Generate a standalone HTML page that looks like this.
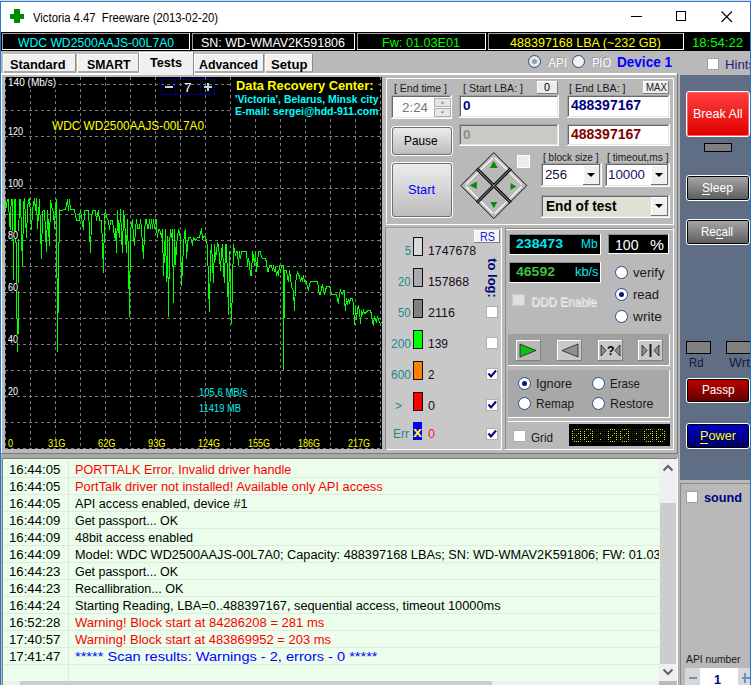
<!DOCTYPE html>
<html><head><meta charset="utf-8"><style>
html,body{margin:0;padding:0;width:751px;height:685px;overflow:hidden;background:#b9b9b9}
body{position:relative;font-family:"Liberation Sans",sans-serif}
div,span,svg{position:absolute;box-sizing:border-box}
span{white-space:pre;display:block}
</style></head><body>
<div style="left:0px;top:0px;width:751px;height:1px;background:#d9d9d9;"></div>
<div style="left:1px;top:2px;width:749px;height:30px;background:#ffffff;"></div>
<div style="left:0px;top:1px;width:1px;height:684px;background:#1a7ad4;"></div>
<div style="left:750px;top:1px;width:1px;height:684px;background:#1a7ad4;"></div>
<div style="left:0px;top:1px;width:751px;height:1px;background:#1a7ad4;"></div>
<div style="left:14px;top:9px;width:6px;height:14px;background:#008a00;"></div>
<div style="left:10px;top:14px;width:14px;height:5px;background:#008a00;"></div>
<span style="left:33px;top:11px;font-size:12px;line-height:14px;color:#000000;font-weight:400;transform:scaleX(0.9413);transform-origin:0 0;">Victoria 4.47  Freeware (2013-02-20)</span>
<div style="left:631px;top:16px;width:11px;height:1px;background:#000000;"></div>
<div style="left:676px;top:11px;width:10px;height:10px;border:1px solid #000"></div>
<svg style="left:721px;top:11px" width="12" height="12"><path d="M0.5 0.5L11 11M11 0.5L0.5 11" stroke="#000" stroke-width="1.1"/></svg>
<div style="left:1px;top:32px;width:749px;height:19px;background:#000000;"></div>
<div style="left:2px;top:33px;width:188px;height:1px;background:#a0a0a0;"></div>
<div style="left:2px;top:33px;width:1px;height:17px;background:#a0a0a0;"></div>
<div style="left:2px;top:49px;width:188px;height:1px;background:#ffffff;"></div>
<div style="left:189px;top:33px;width:1px;height:17px;background:#ffffff;"></div>
<div style="left:192px;top:33px;width:163px;height:1px;background:#a0a0a0;"></div>
<div style="left:192px;top:33px;width:1px;height:17px;background:#a0a0a0;"></div>
<div style="left:192px;top:49px;width:163px;height:1px;background:#ffffff;"></div>
<div style="left:354px;top:33px;width:1px;height:17px;background:#ffffff;"></div>
<div style="left:357px;top:33px;width:129px;height:1px;background:#a0a0a0;"></div>
<div style="left:357px;top:33px;width:1px;height:17px;background:#a0a0a0;"></div>
<div style="left:357px;top:49px;width:129px;height:1px;background:#ffffff;"></div>
<div style="left:485px;top:33px;width:1px;height:17px;background:#ffffff;"></div>
<div style="left:488px;top:33px;width:196px;height:1px;background:#a0a0a0;"></div>
<div style="left:488px;top:33px;width:1px;height:17px;background:#a0a0a0;"></div>
<div style="left:488px;top:49px;width:196px;height:1px;background:#ffffff;"></div>
<div style="left:683px;top:33px;width:1px;height:17px;background:#ffffff;"></div>
<span style="left:18px;top:35px;font-size:13px;line-height:15px;color:#00ffff;font-weight:400;transform:scaleX(0.9347);transform-origin:0 0;">WDC WD2500AAJS-00L7A0</span>
<span style="left:201px;top:35px;font-size:13px;line-height:15px;color:#ffffff;font-weight:400;transform:scaleX(0.9598);transform-origin:0 0;">SN: WD-WMAV2K591806</span>
<span style="left:381.6px;top:35px;font-size:13px;line-height:15px;color:#00ff00;font-weight:400;transform:scaleX(0.9724);transform-origin:0 0;">Fw: 01.03E01</span>
<span style="left:510px;top:35px;font-size:13px;line-height:15px;color:#ffff00;font-weight:400;transform:scaleX(0.9650);transform-origin:0 0;">488397168 LBA (~232 GB)</span>
<span style="left:692px;top:35px;font-size:13px;line-height:15px;color:#00ff00;font-weight:400;transform:scaleX(1.0079);transform-origin:0 0;">18:54:22</span>
<div style="left:1px;top:51px;width:749px;height:634px;background:#b9b9b9;"></div>
<div style="left:3px;top:54px;width:73px;height:19px;background:#f0f0f0;"></div>
<div style="left:3px;top:54px;width:73px;height:1px;background:#ffffff;"></div>
<div style="left:3px;top:54px;width:1px;height:19px;background:#ffffff;"></div>
<div style="left:75px;top:54px;width:1px;height:19px;background:#8a8a8a;"></div>
<div style="left:4px;top:71px;width:72px;height:1px;background:#a9a9a9;"></div>
<div style="left:4px;top:72px;width:72px;height:1px;background:#a9a9a9;"></div>
<div style="left:77px;top:54px;width:62px;height:19px;background:#f0f0f0;"></div>
<div style="left:77px;top:54px;width:62px;height:1px;background:#ffffff;"></div>
<div style="left:77px;top:54px;width:1px;height:19px;background:#ffffff;"></div>
<div style="left:138px;top:54px;width:1px;height:19px;background:#8a8a8a;"></div>
<div style="left:78px;top:71px;width:61px;height:1px;background:#a9a9a9;"></div>
<div style="left:78px;top:72px;width:61px;height:1px;background:#a9a9a9;"></div>
<div style="left:194px;top:54px;width:70px;height:19px;background:#f0f0f0;"></div>
<div style="left:194px;top:54px;width:70px;height:1px;background:#ffffff;"></div>
<div style="left:194px;top:54px;width:1px;height:19px;background:#ffffff;"></div>
<div style="left:263px;top:54px;width:1px;height:19px;background:#8a8a8a;"></div>
<div style="left:195px;top:71px;width:69px;height:1px;background:#a9a9a9;"></div>
<div style="left:195px;top:72px;width:69px;height:1px;background:#a9a9a9;"></div>
<div style="left:265px;top:54px;width:48px;height:19px;background:#f0f0f0;"></div>
<div style="left:265px;top:54px;width:48px;height:1px;background:#ffffff;"></div>
<div style="left:265px;top:54px;width:1px;height:19px;background:#ffffff;"></div>
<div style="left:312px;top:54px;width:1px;height:19px;background:#8a8a8a;"></div>
<div style="left:266px;top:71px;width:47px;height:1px;background:#a9a9a9;"></div>
<div style="left:266px;top:72px;width:47px;height:1px;background:#a9a9a9;"></div>
<div style="left:1px;top:73px;width:677px;height:1px;background:#ffffff;"></div>
<div style="left:1px;top:74px;width:677px;height:1px;background:#ffffff;"></div>
<div style="left:1px;top:73px;width:1px;height:380px;background:#ffffff;"></div>
<div style="left:677px;top:73px;width:1px;height:381px;background:#7a7a7a;"></div>
<div style="left:1px;top:453px;width:677px;height:1px;background:#7a7a7a;"></div>
<div style="left:139px;top:52px;width:55px;height:23px;background:#f0f0f0;"></div>
<div style="left:139px;top:52px;width:55px;height:1px;background:#ffffff;"></div>
<div style="left:139px;top:52px;width:1px;height:23px;background:#ffffff;"></div>
<div style="left:193px;top:52px;width:1px;height:23px;background:#8a8a8a;"></div>
<span style="left:9.5px;top:58px;font-size:12px;line-height:14px;color:#000000;font-weight:700;transform:scaleX(1.0672);transform-origin:0 0;">Standard</span>
<span style="left:86.5px;top:58px;font-size:12px;line-height:14px;color:#000000;font-weight:700;transform:scaleX(1.0196);transform-origin:0 0;">SMART</span>
<span style="left:150px;top:56px;font-size:12px;line-height:14px;color:#000000;font-weight:700;transform:scaleX(1.0508);transform-origin:0 0;">Tests</span>
<span style="left:198.5px;top:58px;font-size:12px;line-height:14px;color:#000000;font-weight:700;transform:scaleX(1.0288);transform-origin:0 0;">Advanced</span>
<span style="left:270.5px;top:58px;font-size:12px;line-height:14px;color:#000000;font-weight:700;transform:scaleX(1.0950);transform-origin:0 0;">Setup</span>
<div style="left:528.0px;top:55.0px;width:13px;height:13px;border:1px solid #1f4e8c;border-radius:50%;background:#e6e6e6"></div>
<div style="left:532.0px;top:59.0px;width:5px;height:5px;border-radius:50%;background:#9a9a9a"></div>
<div style="left:572.0px;top:55.0px;width:13px;height:13px;border:1px solid #1f4e8c;border-radius:50%;background:#f0f0f0"></div>
<span style="left:548px;top:56px;font-size:12px;line-height:14px;color:#ffffff;font-weight:400;transform:scaleX(0.9823);transform-origin:0 0;text-shadow:-1px -1px 0 #9a9a9a;">API</span>
<span style="left:592px;top:56px;font-size:12px;line-height:14px;color:#ffffff;font-weight:400;transform:scaleX(0.9191);transform-origin:0 0;text-shadow:-1px -1px 0 #9a9a9a;">PIO</span>
<span style="left:617px;top:53px;font-size:15px;line-height:17px;color:#0000ff;font-weight:700;transform:scaleX(0.9035);transform-origin:0 0;">Device 1</span>
<div style="left:707px;top:58px;width:12px;height:12px;background:#ffffff;box-shadow:inset 0 0 0 1px #a0a0a0;"></div>
<span style="left:724.5px;top:57px;font-size:13px;line-height:15px;color:#2a1a80;font-weight:400;transform:scaleX(1.0129);transform-origin:0 0;">Hints</span>
<div style="left:5px;top:77px;width:377px;height:372px;background:#000000;"></div>
<svg style="left:0;top:0" width="751" height="685"><line x1="5.5" y1="77" x2="5.5" y2="449" stroke="#7c7c7c" stroke-dasharray="3 3"/><line x1="30.5" y1="77" x2="30.5" y2="449" stroke="#7c7c7c" stroke-dasharray="3 3"/><line x1="55.5" y1="77" x2="55.5" y2="449" stroke="#7c7c7c" stroke-dasharray="3 3"/><line x1="80.5" y1="77" x2="80.5" y2="449" stroke="#7c7c7c" stroke-dasharray="3 3"/><line x1="105.5" y1="77" x2="105.5" y2="449" stroke="#7c7c7c" stroke-dasharray="3 3"/><line x1="130.5" y1="77" x2="130.5" y2="449" stroke="#7c7c7c" stroke-dasharray="3 3"/><line x1="155.5" y1="77" x2="155.5" y2="449" stroke="#7c7c7c" stroke-dasharray="3 3"/><line x1="180.5" y1="77" x2="180.5" y2="449" stroke="#7c7c7c" stroke-dasharray="3 3"/><line x1="205.5" y1="77" x2="205.5" y2="449" stroke="#7c7c7c" stroke-dasharray="3 3"/><line x1="230.5" y1="77" x2="230.5" y2="449" stroke="#7c7c7c" stroke-dasharray="3 3"/><line x1="255.5" y1="77" x2="255.5" y2="449" stroke="#7c7c7c" stroke-dasharray="3 3"/><line x1="280.5" y1="77" x2="280.5" y2="449" stroke="#7c7c7c" stroke-dasharray="3 3"/><line x1="305.5" y1="77" x2="305.5" y2="449" stroke="#7c7c7c" stroke-dasharray="3 3"/><line x1="330.5" y1="77" x2="330.5" y2="449" stroke="#7c7c7c" stroke-dasharray="3 3"/><line x1="355.5" y1="77" x2="355.5" y2="449" stroke="#7c7c7c" stroke-dasharray="3 3"/><line x1="380.5" y1="77" x2="380.5" y2="449" stroke="#7c7c7c" stroke-dasharray="3 3"/><line x1="5" y1="84.5" x2="382" y2="84.5" stroke="#7c7c7c" stroke-dasharray="3 3"/><line x1="5" y1="110.5" x2="382" y2="110.5" stroke="#7c7c7c" stroke-dasharray="3 3"/><line x1="5" y1="136.5" x2="382" y2="136.5" stroke="#7c7c7c" stroke-dasharray="3 3"/><line x1="5" y1="162.5" x2="382" y2="162.5" stroke="#7c7c7c" stroke-dasharray="3 3"/><line x1="5" y1="188.5" x2="382" y2="188.5" stroke="#7c7c7c" stroke-dasharray="3 3"/><line x1="5" y1="214.5" x2="382" y2="214.5" stroke="#7c7c7c" stroke-dasharray="3 3"/><line x1="5" y1="240.5" x2="382" y2="240.5" stroke="#7c7c7c" stroke-dasharray="3 3"/><line x1="5" y1="266.5" x2="382" y2="266.5" stroke="#7c7c7c" stroke-dasharray="3 3"/><line x1="5" y1="292.5" x2="382" y2="292.5" stroke="#7c7c7c" stroke-dasharray="3 3"/><line x1="5" y1="318.5" x2="382" y2="318.5" stroke="#7c7c7c" stroke-dasharray="3 3"/><line x1="5" y1="344.5" x2="382" y2="344.5" stroke="#7c7c7c" stroke-dasharray="3 3"/><line x1="5" y1="370.5" x2="382" y2="370.5" stroke="#7c7c7c" stroke-dasharray="3 3"/><line x1="5" y1="396.5" x2="382" y2="396.5" stroke="#7c7c7c" stroke-dasharray="3 3"/><line x1="5" y1="422.5" x2="382" y2="422.5" stroke="#7c7c7c" stroke-dasharray="3 3"/><line x1="5" y1="448.5" x2="382" y2="448.5" stroke="#7c7c7c" stroke-dasharray="3 3"/></svg>
<svg style="left:0;top:0" width="751" height="685"><polyline points="5.5,199.5 5.5,210.5 6.5,205.5 7.5,199.5 8.5,199.5 9.5,224.5 10.5,229.5 10.5,213.5 11.5,199.5 12.5,199.5 13.5,279.5 14.5,199.5 15.5,199.5 16.5,283.5 17.5,351.5 18.5,316.5 18.5,240.5 19.5,199.5 20.5,199.5 21.5,233.5 22.5,266.5 23.5,204.5 24.5,198.5 25.5,218.5 26.5,237.5 27.5,209.5 28.5,199.5 29.5,198.5 30.5,214.5 31.5,229.5 32.5,210.5 33.5,204.5 34.5,198.5 35.5,210.5 36.5,198.5 37.5,228.5 38.5,214.5 39.5,199.5 40.5,229.5 41.5,258.5 42.5,211.5 43.5,210.5 44.5,210.5 45.5,231.5 46.5,251.5 47.5,210.5 48.5,227.5 49.5,245.5 50.5,200.5 51.5,205.5 52.5,210.5 53.5,211.5 54.5,228.5 55.5,204.5 56.5,199.5 57.5,351.5 58.5,277.5 59.5,209.5 60.5,210.5 62.5,210.5 63.5,209.5 65.5,209.5 66.5,204.5 67.5,199.5 68.5,210.5 69.5,199.5 70.5,209.5 74.5,209.5 75.5,215.5 76.5,220.5 79.5,220.5 79.5,215.5 80.5,210.5 81.5,217.5 82.5,223.5 83.5,229.5 84.5,210.5 88.5,210.5 89.5,231.5 90.5,252.5 91.5,219.5 92.5,210.5 95.5,210.5 96.5,220.5 97.5,214.5 98.5,210.5 99.5,220.5 101.5,220.5 102.5,245.5 103.5,272.5 104.5,215.5 105.5,210.5 106.5,217.5 108.5,220.5 109.5,229.5 110.5,220.5 112.5,220.5 113.5,228.5 114.5,237.5 115.5,228.5 116.5,252.5 117.5,210.5 118.5,228.5 119.5,237.5 120.5,209.5 121.5,236.5 122.5,252.5 123.5,210.5 124.5,219.5 125.5,236.5 126.5,252.5 127.5,219.5 128.5,260.5 129.5,316.5 130.5,229.5 131.5,224.5 132.5,219.5 133.5,237.5 134.5,245.5 135.5,228.5 136.5,219.5 137.5,228.5 139.5,228.5 140.5,219.5 141.5,228.5 142.5,244.5 143.5,258.5 144.5,232.5 145.5,219.5 146.5,219.5 147.5,228.5 148.5,228.5 149.5,219.5 150.5,228.5 151.5,219.5 152.5,228.5 153.5,219.5 154.5,228.5 155.5,219.5 156.5,219.5 156.5,228.5 157.5,237.5 158.5,229.5 159.5,229.5 160.5,232.5 161.5,237.5 162.5,229.5 163.5,275.5 164.5,252.5 165.5,229.5 166.5,281.5 167.5,236.5 168.5,316.5 169.5,244.5 170.5,229.5 171.5,237.5 172.5,229.5 173.5,302.5 174.5,229.5 175.5,264.5 176.5,245.5 177.5,237.5 178.5,229.5 179.5,233.5 180.5,237.5 181.5,285.5 182.5,267.5 183.5,245.5 184.5,232.5 185.5,229.5 186.5,258.5 187.5,245.5 188.5,237.5 190.5,237.5 191.5,240.5 192.5,245.5 193.5,237.5 195.5,240.5 196.5,238.5 197.5,237.5 199.5,237.5 200.5,233.5 201.5,228.5 202.5,238.5 203.5,236.5 205.5,236.5 206.5,241.5 207.5,245.5 208.5,285.5 209.5,311.5 210.5,255.5 211.5,244.5 212.5,262.5 213.5,282.5 214.5,244.5 215.5,259.5 216.5,251.5 217.5,243.5 218.5,245.5 219.5,257.5 220.5,270.5 221.5,251.5 222.5,244.5 223.5,270.5 224.5,282.5 225.5,244.5 226.5,244.5 227.5,279.5 228.5,314.5 229.5,251.5 230.5,289.5 231.5,323.5 232.5,283.5 233.5,244.5 234.5,251.5 235.5,254.5 236.5,251.5 237.5,251.5 238.5,265.5 239.5,251.5 240.5,258.5 241.5,251.5 246.5,251.5 247.5,265.5 248.5,258.5 249.5,263.5 250.5,275.5 251.5,275.5 252.5,251.5 253.5,255.5 254.5,265.5 255.5,251.5 256.5,271.5 257.5,263.5 258.5,251.5 260.5,251.5 261.5,257.5 262.5,258.5 265.5,258.5 266.5,262.5 267.5,271.5 268.5,271.5 269.5,265.5 271.5,265.5 272.5,270.5 273.5,265.5 274.5,271.5 275.5,267.5 276.5,275.5 277.5,272.5 278.5,275.5 279.5,265.5 280.5,272.5 281.5,265.5 283.5,265.5 283.5,369.5 284.5,270.5 286.5,270.5 287.5,277.5 288.5,281.5 289.5,270.5 290.5,276.5 291.5,286.5 293.5,291.5 294.5,310.5 295.5,283.5 296.5,276.5 297.5,271.5 298.5,275.5 299.5,275.5 300.5,281.5 301.5,277.5 302.5,281.5 303.5,275.5 304.5,281.5 305.5,280.5 306.5,282.5 307.5,287.5 308.5,290.5 309.5,284.5 310.5,281.5 317.5,281.5 318.5,288.5 319.5,294.5 320.5,294.5 321.5,287.5 322.5,285.5 323.5,289.5 324.5,294.5 325.5,290.5 326.5,286.5 329.5,286.5 330.5,288.5 331.5,294.5 336.5,294.5 337.5,299.5 338.5,303.5 339.5,293.5 340.5,290.5 341.5,293.5 342.5,294.5 343.5,290.5 344.5,290.5 344.5,300.5 345.5,310.5 346.5,298.5 347.5,303.5 348.5,300.5 349.5,302.5 350.5,298.5 352.5,298.5 353.5,305.5 354.5,324.5 355.5,306.5 356.5,319.5 357.5,308.5 358.5,306.5 359.5,310.5 360.5,323.5 361.5,310.5 362.5,314.5 363.5,310.5 364.5,313.5 366.5,312.5 367.5,310.5 370.5,310.5 371.5,314.5 372.5,322.5 373.5,324.5 374.5,316.5 375.5,319.5 376.5,322.5 377.5,316.5 378.5,320.5 380.5,323.5 381.5,322.5" fill="none" stroke="#00ff00" stroke-width="1" shape-rendering="crispEdges"/></svg>
<div style="left:6px;top:77px;width:51px;height:13px;background:#000000;"></div>
<span style="left:7.5px;top:77px;font-size:10px;line-height:11px;color:#ffffff;font-weight:400;transform:scaleX(1.0044);transform-origin:0 0;">140 (Mb/s)</span>
<div style="left:7px;top:127px;width:17px;height:8px;background:#000000;"></div>
<span style="left:7.5px;top:126px;font-size:10px;line-height:11px;color:#ffffff;font-weight:400;transform:scaleX(0.8991);transform-origin:0 0;">120</span>
<div style="left:7px;top:179px;width:17px;height:8px;background:#000000;"></div>
<span style="left:7.5px;top:178px;font-size:10px;line-height:11px;color:#ffffff;font-weight:400;transform:scaleX(0.8991);transform-origin:0 0;">100</span>
<div style="left:7px;top:231px;width:12px;height:8px;background:#000000;"></div>
<span style="left:7.5px;top:230px;font-size:10px;line-height:11px;color:#ffffff;font-weight:400;transform:scaleX(0.8991);transform-origin:0 0;">80</span>
<div style="left:7px;top:283px;width:12px;height:8px;background:#000000;"></div>
<span style="left:7.5px;top:282px;font-size:10px;line-height:11px;color:#ffffff;font-weight:400;transform:scaleX(0.8991);transform-origin:0 0;">60</span>
<div style="left:7px;top:335px;width:12px;height:8px;background:#000000;"></div>
<span style="left:7.5px;top:334px;font-size:10px;line-height:11px;color:#ffffff;font-weight:400;transform:scaleX(0.8991);transform-origin:0 0;">40</span>
<div style="left:7px;top:387px;width:12px;height:8px;background:#000000;"></div>
<span style="left:7.5px;top:386px;font-size:10px;line-height:11px;color:#ffffff;font-weight:400;transform:scaleX(0.8991);transform-origin:0 0;">20</span>
<div style="left:7px;top:439px;width:8px;height:8px;background:#000000;"></div>
<span style="left:8px;top:438px;font-size:10px;line-height:11px;color:#ffff00;font-weight:400;transform:scaleX(0.8991);transform-origin:0 0;">0</span>
<div style="left:47px;top:439px;width:20.5px;height:8px;background:#000000;"></div>
<span style="left:48px;top:438px;font-size:10px;line-height:11px;color:#ffff00;font-weight:400;transform:scaleX(0.9259);transform-origin:0 0;">31G</span>
<div style="left:97px;top:439px;width:20.5px;height:8px;background:#000000;"></div>
<span style="left:98px;top:438px;font-size:10px;line-height:11px;color:#ffff00;font-weight:400;transform:scaleX(0.9259);transform-origin:0 0;">62G</span>
<div style="left:147px;top:439px;width:20.5px;height:8px;background:#000000;"></div>
<span style="left:148px;top:438px;font-size:10px;line-height:11px;color:#ffff00;font-weight:400;transform:scaleX(0.9259);transform-origin:0 0;">93G</span>
<div style="left:197px;top:439px;width:25px;height:8px;background:#000000;"></div>
<span style="left:198px;top:438px;font-size:10px;line-height:11px;color:#ffff00;font-weight:400;transform:scaleX(0.8994);transform-origin:0 0;">124G</span>
<div style="left:247px;top:439px;width:25px;height:8px;background:#000000;"></div>
<span style="left:248px;top:438px;font-size:10px;line-height:11px;color:#ffff00;font-weight:400;transform:scaleX(0.8994);transform-origin:0 0;">155G</span>
<div style="left:297px;top:439px;width:25px;height:8px;background:#000000;"></div>
<span style="left:298px;top:438px;font-size:10px;line-height:11px;color:#ffff00;font-weight:400;transform:scaleX(0.8994);transform-origin:0 0;">186G</span>
<div style="left:347px;top:439px;width:25px;height:8px;background:#000000;"></div>
<span style="left:348px;top:438px;font-size:10px;line-height:11px;color:#ffff00;font-weight:400;transform:scaleX(0.8994);transform-origin:0 0;">217G</span>
<span style="left:51.5px;top:119px;font-size:12px;line-height:14px;color:#ffff00;font-weight:400;transform:scaleX(0.9866);transform-origin:0 0;">WDC WD2500AAJS-00L7A0</span>
<div style="left:231px;top:77px;width:147px;height:41px;background:#000000;"></div>
<div style="left:161px;top:79px;width:54px;height:16px;border:1px solid #00007a"></div>
<div style="left:175px;top:79px;width:1px;height:16px;background:#00007a;"></div>
<div style="left:200px;top:79px;width:1px;height:16px;background:#00007a;"></div>
<div style="left:165px;top:86px;width:8px;height:2px;background:#b8d4f0;"></div>
<div style="left:204px;top:86px;width:8px;height:2px;background:#b8d4f0;"></div>
<div style="left:207px;top:83px;width:2px;height:8px;background:#b8d4f0;"></div>
<span style="left:184px;top:80px;font-size:13px;line-height:15px;color:#ffffff;font-weight:400;transform:scaleX(1.0375);transform-origin:0 0;">7</span>
<span style="left:235.5px;top:78px;font-size:13px;line-height:15px;color:#ffff00;font-weight:700;transform:scaleX(0.9861);transform-origin:0 0;">Data Recovery Center:</span>
<span style="left:234.5px;top:93px;font-size:11px;line-height:12px;color:#00ffff;font-weight:700;transform:scaleX(0.9495);transform-origin:0 0;">'Victoria', Belarus, Minsk city</span>
<span style="left:234.5px;top:105px;font-size:11px;line-height:12px;color:#00ffff;font-weight:700;transform:scaleX(0.9560);transform-origin:0 0;">E-mail: sergei@hdd-911.com</span>
<span style="left:199px;top:387px;font-size:10px;line-height:11px;color:#00f0f0;font-weight:400;transform:scaleX(0.9490);transform-origin:0 0;">105,6 MB/s</span>
<span style="left:199px;top:403px;font-size:10px;line-height:11px;color:#00f0f0;font-weight:400;transform:scaleX(0.9367);transform-origin:0 0;">11419 MB</span>
<div style="left:386px;top:78px;width:288px;height:1px;background:#ffffff;"></div>
<div style="left:386px;top:78px;width:1px;height:145px;background:#ffffff;"></div>
<div style="left:673px;top:78px;width:1px;height:147px;background:#ffffff;"></div>
<div style="left:386px;top:224px;width:288px;height:1px;background:#ffffff;"></div>
<div style="left:677px;top:75px;width:1px;height:379px;background:#7a7a7a;"></div>
<span style="left:394px;top:82px;font-size:11px;line-height:12px;color:#1a1a1a;font-weight:400;transform:scaleX(0.9527);transform-origin:0 0;">[ End time ]</span>
<span style="left:463px;top:82px;font-size:11px;line-height:12px;color:#1a1a1a;font-weight:400;transform:scaleX(0.9622);transform-origin:0 0;">[ Start LBA: ]</span>
<span style="left:569px;top:82px;font-size:11px;line-height:12px;color:#1a1a1a;font-weight:400;transform:scaleX(0.9625);transform-origin:0 0;">[ End LBA: ]</span>
<div style="left:391px;top:95px;width:61px;height:24px;background:#fcfcfc;"></div>
<div style="left:391px;top:95px;width:61px;height:1px;background:#a0a0a0;"></div>
<div style="left:391px;top:95px;width:1px;height:24px;background:#a0a0a0;"></div>
<div style="left:392px;top:96px;width:59px;height:1px;background:#696969;"></div>
<div style="left:392px;top:96px;width:1px;height:22px;background:#696969;"></div>
<div style="left:391px;top:118px;width:61px;height:1px;background:#ffffff;"></div>
<div style="left:451px;top:95px;width:1px;height:24px;background:#ffffff;"></div>
<div style="left:392px;top:117px;width:59px;height:1px;background:#e3e3e3;"></div>
<div style="left:450px;top:96px;width:1px;height:22px;background:#e3e3e3;"></div>
<span style="left:402px;top:100px;font-size:13px;line-height:15px;color:#777777;font-weight:400;transform:scaleX(1.0277);transform-origin:0 0;">2:24</span>
<div style="left:434px;top:98px;width:17px;height:9px;background:#e6e6e6;box-shadow:inset 0 0 0 1px #b0b0b0;"></div>
<div style="left:434px;top:108px;width:17px;height:9px;background:#e6e6e6;box-shadow:inset 0 0 0 1px #b0b0b0;"></div>
<svg style="left:434px;top:98px" width="17" height="19"><path d="M6.5 5.5h4l-2-2z" fill="#8a8a8a"/><path d="M6.5 13.5h4l-2 2z" fill="#8a8a8a"/></svg>
<div style="left:459px;top:95px;width:100px;height:23px;background:#ffffff;"></div>
<div style="left:459px;top:95px;width:100px;height:1px;background:#a0a0a0;"></div>
<div style="left:459px;top:95px;width:1px;height:23px;background:#a0a0a0;"></div>
<div style="left:460px;top:96px;width:98px;height:1px;background:#696969;"></div>
<div style="left:460px;top:96px;width:1px;height:21px;background:#696969;"></div>
<div style="left:459px;top:117px;width:100px;height:1px;background:#ffffff;"></div>
<div style="left:558px;top:95px;width:1px;height:23px;background:#ffffff;"></div>
<div style="left:460px;top:116px;width:98px;height:1px;background:#e3e3e3;"></div>
<div style="left:557px;top:96px;width:1px;height:21px;background:#e3e3e3;"></div>
<span style="left:463px;top:98px;font-size:13px;line-height:15px;color:#000080;font-weight:700;transform:scaleX(1.0375);transform-origin:0 0;">0</span>
<div style="left:459px;top:124px;width:100px;height:22px;background:#cacac6;"></div>
<div style="left:459px;top:124px;width:100px;height:1px;background:#a0a0a0;"></div>
<div style="left:459px;top:124px;width:1px;height:22px;background:#a0a0a0;"></div>
<div style="left:460px;top:125px;width:98px;height:1px;background:#696969;"></div>
<div style="left:460px;top:125px;width:1px;height:20px;background:#696969;"></div>
<div style="left:459px;top:145px;width:100px;height:1px;background:#ffffff;"></div>
<div style="left:558px;top:124px;width:1px;height:22px;background:#ffffff;"></div>
<div style="left:460px;top:144px;width:98px;height:1px;background:#e3e3e3;"></div>
<div style="left:557px;top:125px;width:1px;height:20px;background:#e3e3e3;"></div>
<span style="left:463px;top:127px;font-size:13px;line-height:15px;color:#8c8c8c;font-weight:700;transform:scaleX(1.0375);transform-origin:0 0;">0</span>
<div style="left:537px;top:81px;width:21px;height:13px;background:#ececec;box-shadow:inset -1px -1px 0 #808080, inset 1px 1px 0 #ffffff;"></div>
<span style="left:543.5px;top:81px;font-size:11px;line-height:12px;color:#000000;font-weight:400;transform:scaleX(0.9809);transform-origin:0 0;">0</span>
<div style="left:643px;top:81px;width:26px;height:13px;background:#ececec;box-shadow:inset -1px -1px 0 #808080, inset 1px 1px 0 #ffffff;"></div>
<span style="left:645.5px;top:81px;font-size:11px;line-height:12px;color:#202020;font-weight:400;transform:scaleX(0.8810);transform-origin:0 0;">MAX</span>
<div style="left:567px;top:95px;width:103px;height:23px;background:#ffffff;"></div>
<div style="left:567px;top:95px;width:103px;height:1px;background:#a0a0a0;"></div>
<div style="left:567px;top:95px;width:1px;height:23px;background:#a0a0a0;"></div>
<div style="left:568px;top:96px;width:101px;height:1px;background:#696969;"></div>
<div style="left:568px;top:96px;width:1px;height:21px;background:#696969;"></div>
<div style="left:567px;top:117px;width:103px;height:1px;background:#ffffff;"></div>
<div style="left:669px;top:95px;width:1px;height:23px;background:#ffffff;"></div>
<div style="left:568px;top:116px;width:101px;height:1px;background:#e3e3e3;"></div>
<div style="left:668px;top:96px;width:1px;height:21px;background:#e3e3e3;"></div>
<span style="left:571px;top:97px;font-size:14px;line-height:16px;color:#000080;font-weight:700;transform:scaleX(0.9990);transform-origin:0 0;">488397167</span>
<div style="left:567px;top:124px;width:103px;height:22px;background:#ffffff;"></div>
<div style="left:567px;top:124px;width:103px;height:1px;background:#a0a0a0;"></div>
<div style="left:567px;top:124px;width:1px;height:22px;background:#a0a0a0;"></div>
<div style="left:568px;top:125px;width:101px;height:1px;background:#696969;"></div>
<div style="left:568px;top:125px;width:1px;height:20px;background:#696969;"></div>
<div style="left:567px;top:145px;width:103px;height:1px;background:#ffffff;"></div>
<div style="left:669px;top:124px;width:1px;height:22px;background:#ffffff;"></div>
<div style="left:568px;top:144px;width:101px;height:1px;background:#e3e3e3;"></div>
<div style="left:668px;top:125px;width:1px;height:20px;background:#e3e3e3;"></div>
<span style="left:571px;top:126px;font-size:14px;line-height:16px;color:#800000;font-weight:700;transform:scaleX(0.9990);transform-origin:0 0;">488397167</span>
<div style="left:392px;top:127px;width:60px;height:28px;border:1px solid #707070;border-radius:3px;background:linear-gradient(#ececec,#bdbdbd);box-shadow:0 0 0 1px #ffffff"></div>
<span style="left:404px;top:133px;font-size:13px;line-height:15px;color:#000000;font-weight:400;transform:scaleX(0.9089);transform-origin:0 0;">Pause</span>
<div style="left:392px;top:163px;width:60px;height:54px;border:1px solid #707070;border-radius:3px;background:linear-gradient(#ececec,#bdbdbd);box-shadow:0 0 0 1px #ffffff"></div>
<span style="left:408px;top:182px;font-size:13px;line-height:15px;color:#0000ff;font-weight:400;transform:scaleX(0.9835);transform-origin:0 0;">Start</span>
<svg style="left:458px;top:150px" width="72" height="72">
<g transform="translate(35.8,35.6)">
<path d="M0 -33 L33 0 L0 33 L-33 0 Z" fill="#b9b9b9" stroke="#111" stroke-width="1"/>
<path d="M-30 -1 L-1 -30 M1 -30 L30 -1 M-30 1 L-1 30 M1 30 L30 1" fill="none" stroke="#ffffff" stroke-width="1.3" transform="scale(0.93)"/>
<path d="M-17 -17 L17 17" stroke="#111" stroke-width="3.2"/>
<path d="M-17 17 L17 -17" stroke="#111" stroke-width="3.2"/>
<path d="M-17 -17 L17 17" stroke="#9a9a9a" stroke-width="1"/>
<path d="M-17 17 L17 -17" stroke="#9a9a9a" stroke-width="1"/>
<path d="M-4 -17.5 L4 -17.5 L0 -24.5 Z" fill="#0a8a0a"/>
<path d="M-3.5 16.5 L3.5 16.5 L0 22.5 Z" fill="#0a8a0a"/>
<path d="M-17 -4 L-17 3.5 L-24.2 0 Z" fill="#0a8a0a"/>
<path d="M16.7 -2.5 L16.7 4.5 L22.5 1 Z" fill="#0a8a0a"/>
</g></svg>
<div style="left:517px;top:155px;width:13px;height:13px;background:#ececec;box-shadow:inset 0 0 0 1px #ffffff;"></div>
<span style="left:542.5px;top:151px;font-size:11px;line-height:12px;color:#1a1a1a;font-weight:400;transform:scaleX(0.9171);transform-origin:0 0;">[ block size ]</span>
<span style="left:606.5px;top:151px;font-size:11px;line-height:12px;color:#1a1a1a;font-weight:400;transform:scaleX(0.9316);transform-origin:0 0;">[ timeout,ms ]</span>
<div style="left:541px;top:163px;width:61px;height:24px;background:#ffffff;"></div>
<div style="left:541px;top:163px;width:61px;height:1px;background:#a0a0a0;"></div>
<div style="left:541px;top:163px;width:1px;height:24px;background:#a0a0a0;"></div>
<div style="left:542px;top:164px;width:59px;height:1px;background:#696969;"></div>
<div style="left:542px;top:164px;width:1px;height:22px;background:#696969;"></div>
<div style="left:541px;top:186px;width:61px;height:1px;background:#ffffff;"></div>
<div style="left:601px;top:163px;width:1px;height:24px;background:#ffffff;"></div>
<div style="left:542px;top:185px;width:59px;height:1px;background:#e3e3e3;"></div>
<div style="left:600px;top:164px;width:1px;height:22px;background:#e3e3e3;"></div>
<div style="left:583px;top:165px;width:17px;height:20px;background:#f0f0f0;box-shadow:inset -1px -1px 0 #707070, inset 1px 1px 0 #ffffff;"></div>
<svg style="left:586.0px;top:171.5px" width="10" height="6"><path d="M1 1H9L5 5Z" fill="#000"/></svg>
<span style="left:544.5px;top:167px;font-size:13px;line-height:15px;color:#10103a;font-weight:400;transform:scaleX(1.0144);transform-origin:0 0;">256</span>
<div style="left:605px;top:163px;width:65px;height:24px;background:#ffffff;"></div>
<div style="left:605px;top:163px;width:65px;height:1px;background:#a0a0a0;"></div>
<div style="left:605px;top:163px;width:1px;height:24px;background:#a0a0a0;"></div>
<div style="left:606px;top:164px;width:63px;height:1px;background:#696969;"></div>
<div style="left:606px;top:164px;width:1px;height:22px;background:#696969;"></div>
<div style="left:605px;top:186px;width:65px;height:1px;background:#ffffff;"></div>
<div style="left:669px;top:163px;width:1px;height:24px;background:#ffffff;"></div>
<div style="left:606px;top:185px;width:63px;height:1px;background:#e3e3e3;"></div>
<div style="left:668px;top:164px;width:1px;height:22px;background:#e3e3e3;"></div>
<div style="left:651px;top:165px;width:17px;height:20px;background:#f0f0f0;box-shadow:inset -1px -1px 0 #707070, inset 1px 1px 0 #ffffff;"></div>
<svg style="left:654.0px;top:171.5px" width="10" height="6"><path d="M1 1H9L5 5Z" fill="#000"/></svg>
<span style="left:608px;top:167px;font-size:13px;line-height:15px;color:#20106a;font-weight:400;transform:scaleX(1.0236);transform-origin:0 0;">10000</span>
<div style="left:541px;top:195px;width:129px;height:23px;background:#e0e0d4;"></div>
<div style="left:541px;top:195px;width:129px;height:1px;background:#a0a0a0;"></div>
<div style="left:541px;top:195px;width:1px;height:23px;background:#a0a0a0;"></div>
<div style="left:542px;top:196px;width:127px;height:1px;background:#696969;"></div>
<div style="left:542px;top:196px;width:1px;height:21px;background:#696969;"></div>
<div style="left:541px;top:217px;width:129px;height:1px;background:#ffffff;"></div>
<div style="left:669px;top:195px;width:1px;height:23px;background:#ffffff;"></div>
<div style="left:542px;top:216px;width:127px;height:1px;background:#e3e3e3;"></div>
<div style="left:668px;top:196px;width:1px;height:21px;background:#e3e3e3;"></div>
<div style="left:651px;top:197px;width:17px;height:19px;background:#f0f0f0;box-shadow:inset -1px -1px 0 #707070, inset 1px 1px 0 #ffffff;"></div>
<svg style="left:654.0px;top:203.0px" width="10" height="6"><path d="M1 1H9L5 5Z" fill="#000"/></svg>
<span style="left:545.5px;top:198px;font-size:14px;line-height:16px;color:#000000;font-weight:700;transform:scaleX(0.9748);transform-origin:0 0;">End of test</span>
<div style="left:386px;top:228px;width:115px;height:221px;background:#c8c8c8;"></div>
<div style="left:385px;top:228px;width:1px;height:222px;background:#8a8a8a;"></div>
<div style="left:385px;top:227px;width:116px;height:1px;background:#a0a0a0;"></div>
<div style="left:501px;top:228px;width:1px;height:222px;background:#ffffff;"></div>
<div style="left:386px;top:449px;width:116px;height:1px;background:#ffffff;"></div>
<div style="left:474px;top:230px;width:26px;height:13px;background:#f4f4f4;box-shadow:inset -1px -1px 0 #808080, inset 1px 1px 0 #ffffff;"></div>
<span style="left:479.5px;top:230px;font-size:12px;line-height:14px;color:#2020e0;font-weight:400;transform:scaleX(0.8998);transform-origin:0 0;">RS</span>
<span style="left:404.7px;top:243px;font-size:13px;line-height:15px;color:#208888;font-weight:400;transform:scaleX(0.8300);transform-origin:0 0;">5</span>
<div style="left:413px;top:237px;width:10px;height:19px;background:#d9d9d9;box-shadow:inset 0 0 0 1px #101010;"></div>
<span style="left:427.5px;top:243px;font-size:13px;line-height:15px;color:#1a0a1a;font-weight:400;transform:scaleX(0.9485);transform-origin:0 0;">1747678</span>
<span style="left:398.2px;top:274px;font-size:13px;line-height:15px;color:#208888;font-weight:400;transform:scaleX(0.8645);transform-origin:0 0;">20</span>
<div style="left:413px;top:268px;width:10px;height:19px;background:#aaaab0;box-shadow:inset 0 0 0 1px #101010;"></div>
<span style="left:427.5px;top:274px;font-size:13px;line-height:15px;color:#1a0a1a;font-weight:400;transform:scaleX(0.9452);transform-origin:0 0;">157868</span>
<span style="left:398.2px;top:305px;font-size:13px;line-height:15px;color:#208888;font-weight:400;transform:scaleX(0.8645);transform-origin:0 0;">50</span>
<div style="left:413px;top:299px;width:10px;height:19px;background:#808080;box-shadow:inset 0 0 0 1px #101010;"></div>
<span style="left:427.5px;top:305px;font-size:13px;line-height:15px;color:#1a0a1a;font-weight:400;transform:scaleX(0.9659);transform-origin:0 0;">2116</span>
<div style="left:486px;top:306px;width:12px;height:12px;background:#ffffff;box-shadow:inset 0 0 0 1px #b0b0b0;"></div>
<span style="left:390.7px;top:336px;font-size:13px;line-height:15px;color:#208888;font-weight:400;transform:scaleX(0.9222);transform-origin:0 0;">200</span>
<div style="left:413px;top:330px;width:10px;height:19px;background:#00ff00;box-shadow:inset 0 0 0 1px #101010;"></div>
<span style="left:427.5px;top:336px;font-size:13px;line-height:15px;color:#1a0a1a;font-weight:400;transform:scaleX(0.9222);transform-origin:0 0;">139</span>
<div style="left:486px;top:337px;width:12px;height:12px;background:#ffffff;box-shadow:inset 0 0 0 1px #b0b0b0;"></div>
<span style="left:390.7px;top:367px;font-size:13px;line-height:15px;color:#208888;font-weight:400;transform:scaleX(0.9222);transform-origin:0 0;">600</span>
<div style="left:413px;top:361px;width:10px;height:19px;background:#ff8000;box-shadow:inset 0 0 0 1px #101010;"></div>
<span style="left:427.5px;top:367px;font-size:13px;line-height:15px;color:#1a0a1a;font-weight:400;transform:scaleX(0.8991);transform-origin:0 0;">2</span>
<div style="left:486px;top:368px;width:12px;height:12px;background:#ffffff;box-shadow:inset 0 0 0 1px #b0b0b0;"></div>
<svg style="left:486px;top:368px" width="12" height="12"><path d="M2.5 5.5L5 8.5L10 2.5" fill="none" stroke="#000080" stroke-width="2"/></svg>
<span style="left:394.8px;top:398px;font-size:13px;line-height:15px;color:#208888;font-weight:400;transform:scaleX(0.9219);transform-origin:0 0;">&gt;</span>
<div style="left:413px;top:392px;width:10px;height:19px;background:#ff0000;box-shadow:inset 0 0 0 1px #101010;"></div>
<span style="left:427.5px;top:398px;font-size:13px;line-height:15px;color:#1a0a1a;font-weight:400;transform:scaleX(0.9683);transform-origin:0 0;">0</span>
<div style="left:486px;top:399px;width:12px;height:12px;background:#ffffff;box-shadow:inset 0 0 0 1px #b0b0b0;"></div>
<svg style="left:486px;top:399px" width="12" height="12"><path d="M2.5 5.5L5 8.5L10 2.5" fill="none" stroke="#000080" stroke-width="2"/></svg>
<span style="left:392.5px;top:426px;font-size:13px;line-height:15px;color:#208888;font-weight:400;transform:scaleX(0.9233);transform-origin:0 0;">Err</span>
<div style="left:413px;top:422px;width:9px;height:18px;background:#0000ff;"></div>
<span style="left:413px;top:424px;font-size:14px;line-height:16px;color:#ffff00;font-weight:700;transform:scaleX(1.1560);transform-origin:0 0;">x</span>
<span style="left:427.5px;top:426px;font-size:13px;line-height:15px;color:#ff2020;font-weight:400;transform:scaleX(0.9683);transform-origin:0 0;">0</span>
<div style="left:486px;top:428px;width:12px;height:12px;background:#ffffff;box-shadow:inset 0 0 0 1px #b0b0b0;"></div>
<svg style="left:486px;top:428px" width="12" height="12"><path d="M2.5 5.5L5 8.5L10 2.5" fill="none" stroke="#000080" stroke-width="2"/></svg>
<span style="left:471px;top:270.5px;width:41px;height:14px;font-size:13px;line-height:14px;font-weight:700;color:#000080;transform:rotate(90deg);transform-origin:50% 50%;text-align:center">to log:</span>
<div style="left:505px;top:228px;width:169px;height:1px;background:#8a8a8a;"></div>
<div style="left:505px;top:228px;width:1px;height:222px;background:#8a8a8a;"></div>
<div style="left:505px;top:449px;width:169px;height:1px;background:#ffffff;"></div>
<div style="left:673px;top:228px;width:1px;height:222px;background:#ffffff;"></div>
<div style="left:506px;top:229px;width:167px;height:1px;background:#ffffff;"></div>
<div style="left:509px;top:234px;width:92px;height:21px;background:#000000;"></div>
<div style="left:509px;top:234px;width:92px;height:1px;background:#8a8a8a;"></div>
<div style="left:509px;top:234px;width:1px;height:21px;background:#8a8a8a;"></div>
<div style="left:509px;top:254px;width:92px;height:1px;background:#ffffff;"></div>
<div style="left:600px;top:234px;width:1px;height:21px;background:#ffffff;"></div>
<span style="left:515.5px;top:237px;font-size:12px;line-height:14px;color:#00e8f0;font-weight:700;transform:scaleX(1.1739);transform-origin:0 0;">238473</span>
<span style="left:580.5px;top:237px;font-size:12px;line-height:14px;color:#00e8f0;font-weight:400;transform:scaleX(0.9899);transform-origin:0 0;">Mb</span>
<div style="left:608px;top:234px;width:61px;height:20px;background:#000000;"></div>
<div style="left:608px;top:234px;width:61px;height:1px;background:#8a8a8a;"></div>
<div style="left:608px;top:234px;width:1px;height:20px;background:#8a8a8a;"></div>
<div style="left:608px;top:253px;width:61px;height:1px;background:#ffffff;"></div>
<div style="left:668px;top:234px;width:1px;height:20px;background:#ffffff;"></div>
<span style="left:614.5px;top:236px;font-size:15px;line-height:17px;color:#ffffff;font-weight:400;transform:scaleX(0.9391);transform-origin:0 0;">100</span>
<span style="left:650px;top:236px;font-size:15px;line-height:17px;color:#ffffff;font-weight:400;transform:scaleX(1.0496);transform-origin:0 0;">%</span>
<div style="left:509px;top:262px;width:92px;height:21px;background:#000000;"></div>
<div style="left:509px;top:262px;width:92px;height:1px;background:#8a8a8a;"></div>
<div style="left:509px;top:262px;width:1px;height:21px;background:#8a8a8a;"></div>
<div style="left:509px;top:282px;width:92px;height:1px;background:#ffffff;"></div>
<div style="left:600px;top:262px;width:1px;height:21px;background:#ffffff;"></div>
<span style="left:515.5px;top:265px;font-size:12px;line-height:14px;color:#40c040;font-weight:700;transform:scaleX(1.1689);transform-origin:0 0;">46592</span>
<span style="left:574.5px;top:265px;font-size:12px;line-height:14px;color:#00e8f0;font-weight:400;transform:scaleX(1.0678);transform-origin:0 0;">kb/s</span>
<div style="left:512px;top:294px;width:13px;height:12px;background:#e0e0e0;box-shadow:inset 0 0 0 1px #c8c8c8;"></div>
<span style="left:531px;top:294px;font-size:13px;line-height:15px;color:#d8d8d8;font-weight:400;transform:scaleX(0.9065);transform-origin:0 0;text-shadow:1px 1px 0 #f0f0f0;">DDD Enable</span>
<div style="left:615.0px;top:265.5px;width:13px;height:13px;border:1px solid #1f4e8c;border-radius:50%;background:#ffffff"></div>
<span style="left:633px;top:265px;font-size:13px;line-height:15px;color:#1a1a1a;font-weight:400;transform:scaleX(1.0142);transform-origin:0 0;">verify</span>
<div style="left:615.0px;top:287.5px;width:13px;height:13px;border:1px solid #1f4e8c;border-radius:50%;background:#ffffff"></div>
<div style="left:619.0px;top:291.5px;width:5px;height:5px;border-radius:50%;background:#0a1a6a"></div>
<span style="left:633px;top:287px;font-size:13px;line-height:15px;color:#1a1a1a;font-weight:400;transform:scaleX(0.9994);transform-origin:0 0;">read</span>
<div style="left:615.0px;top:309.5px;width:13px;height:13px;border:1px solid #1f4e8c;border-radius:50%;background:#ffffff"></div>
<span style="left:633px;top:309px;font-size:13px;line-height:15px;color:#1a1a1a;font-weight:400;transform:scaleX(1.0566);transform-origin:0 0;">write</span>
<div style="left:508px;top:334px;width:162px;height:32px;background:#a0a0a0;"></div>
<div style="left:508px;top:365px;width:162px;height:1px;background:#ffffff;"></div>
<div style="left:669px;top:334px;width:1px;height:32px;background:#ffffff;"></div>
<div style="left:516px;top:340px;width:25px;height:21px;background:#b8b8b8;box-shadow:inset -1px -1px 0 #808080, inset 1px 1px 0 #ffffff;"></div>
<div style="left:557px;top:340px;width:25px;height:21px;background:#c8c8c8;box-shadow:inset -1px -1px 0 #808080, inset 1px 1px 0 #ffffff;"></div>
<div style="left:598px;top:340px;width:25px;height:21px;background:#c8c8c8;box-shadow:inset -1px -1px 0 #808080, inset 1px 1px 0 #ffffff;"></div>
<div style="left:638px;top:340px;width:25px;height:21px;background:#c8c8c8;box-shadow:inset -1px -1px 0 #808080, inset 1px 1px 0 #ffffff;"></div>
<svg style="left:516px;top:340px" width="25" height="21"><path d="M4 4L20 10.5L4 17Z" fill="#10c010" stroke="#202020" stroke-width="0.8"/></svg>
<svg style="left:557px;top:340px" width="25" height="21"><path d="M21 4L5 10.5L21 17Z" fill="#909090" stroke="#202020" stroke-width="0.8"/></svg>
<svg style="left:598px;top:340px" width="25" height="21"><path d="M3 5L8 10.5L3 16Z" fill="#909090" stroke="#202020" stroke-width="0.8"/><path d="M22 5L17 10.5L22 16Z" fill="#909090" stroke="#202020" stroke-width="0.8"/></svg>
<span style="left:606.5px;top:343px;font-size:13px;line-height:15px;color:#000000;font-weight:700;transform:scaleX(0.9446);transform-origin:0 0;">?</span>
<svg style="left:638px;top:340px" width="25" height="21"><path d="M4 5L9 10.5L4 16Z" fill="#909090" stroke="#202020" stroke-width="0.8"/><path d="M21 5L16 10.5L21 16Z" fill="#909090" stroke="#202020" stroke-width="0.8"/><rect x="11.5" y="4" width="2" height="13" fill="#202020"/></svg>
<div style="left:508px;top:370px;width:162px;height:47px;background:#a8a8a8;"></div>
<div style="left:508px;top:417px;width:162px;height:1px;background:#ffffff;"></div>
<div style="left:669px;top:370px;width:1px;height:48px;background:#ffffff;"></div>
<div style="left:518.0px;top:376.5px;width:13px;height:13px;border:1px solid #1f4e8c;border-radius:50%;background:#ffffff"></div>
<div style="left:522.0px;top:380.5px;width:5px;height:5px;border-radius:50%;background:#0a1a6a"></div>
<span style="left:536.0px;top:376px;font-size:13px;line-height:15px;color:#1a1a1a;font-weight:400;transform:scaleX(0.9767);transform-origin:0 0;">Ignore</span>
<div style="left:518.0px;top:396.5px;width:13px;height:13px;border:1px solid #1f4e8c;border-radius:50%;background:#ffffff"></div>
<span style="left:536.0px;top:396px;font-size:13px;line-height:15px;color:#1a1a1a;font-weight:400;transform:scaleX(0.9068);transform-origin:0 0;">Remap</span>
<div style="left:592.0px;top:376.5px;width:13px;height:13px;border:1px solid #1f4e8c;border-radius:50%;background:#ffffff"></div>
<span style="left:610.0px;top:376px;font-size:13px;line-height:15px;color:#1a1a1a;font-weight:400;transform:scaleX(0.8834);transform-origin:0 0;">Erase</span>
<div style="left:592.0px;top:396.5px;width:13px;height:13px;border:1px solid #1f4e8c;border-radius:50%;background:#ffffff"></div>
<span style="left:610.0px;top:396px;font-size:13px;line-height:15px;color:#1a1a1a;font-weight:400;transform:scaleX(0.9557);transform-origin:0 0;">Restore</span>
<div style="left:508px;top:421px;width:162px;height:1px;background:#ffffff;"></div>
<div style="left:513px;top:430px;width:13px;height:12px;background:#ffffff;box-shadow:inset 0 0 0 1px #b0b0b0;"></div>
<span style="left:531px;top:430px;font-size:13px;line-height:15px;color:#1a1a1a;font-weight:400;transform:scaleX(0.8958);transform-origin:0 0;">Grid</span>
<div style="left:569px;top:424px;width:101px;height:22px;background:#000000;"></div>
<svg style="left:0;top:0" width="751" height="685" shape-rendering="crispEdges"><rect x="572" y="429" width="1" height="1" fill="#103010"/><rect x="572" y="431" width="1" height="1" fill="#f0e000"/><rect x="572" y="433" width="1" height="1" fill="#f0e000"/><rect x="572" y="435" width="1" height="1" fill="#f0e000"/><rect x="572" y="437" width="1" height="1" fill="#f0e000"/><rect x="572" y="439" width="1" height="1" fill="#f0e000"/><rect x="572" y="441" width="1" height="1" fill="#103010"/><rect x="574" y="429" width="1" height="1" fill="#f0e000"/><rect x="574" y="431" width="1" height="1" fill="#103010"/><rect x="574" y="433" width="1" height="1" fill="#103010"/><rect x="574" y="435" width="1" height="1" fill="#103010"/><rect x="574" y="437" width="1" height="1" fill="#f0e000"/><rect x="574" y="439" width="1" height="1" fill="#103010"/><rect x="574" y="441" width="1" height="1" fill="#f0e000"/><rect x="576" y="429" width="1" height="1" fill="#f0e000"/><rect x="576" y="431" width="1" height="1" fill="#103010"/><rect x="576" y="433" width="1" height="1" fill="#103010"/><rect x="576" y="435" width="1" height="1" fill="#f0e000"/><rect x="576" y="437" width="1" height="1" fill="#103010"/><rect x="576" y="439" width="1" height="1" fill="#103010"/><rect x="576" y="441" width="1" height="1" fill="#f0e000"/><rect x="578" y="429" width="1" height="1" fill="#f0e000"/><rect x="578" y="431" width="1" height="1" fill="#103010"/><rect x="578" y="433" width="1" height="1" fill="#f0e000"/><rect x="578" y="435" width="1" height="1" fill="#103010"/><rect x="578" y="437" width="1" height="1" fill="#103010"/><rect x="578" y="439" width="1" height="1" fill="#103010"/><rect x="578" y="441" width="1" height="1" fill="#f0e000"/><rect x="580" y="429" width="1" height="1" fill="#103010"/><rect x="580" y="431" width="1" height="1" fill="#f0e000"/><rect x="580" y="433" width="1" height="1" fill="#f0e000"/><rect x="580" y="435" width="1" height="1" fill="#f0e000"/><rect x="580" y="437" width="1" height="1" fill="#f0e000"/><rect x="580" y="439" width="1" height="1" fill="#f0e000"/><rect x="580" y="441" width="1" height="1" fill="#103010"/><rect x="582" y="429" width="1" height="1" fill="#103010"/><rect x="582" y="431" width="1" height="1" fill="#103010"/><rect x="582" y="433" width="1" height="1" fill="#103010"/><rect x="582" y="435" width="1" height="1" fill="#103010"/><rect x="582" y="437" width="1" height="1" fill="#103010"/><rect x="582" y="439" width="1" height="1" fill="#103010"/><rect x="582" y="441" width="1" height="1" fill="#103010"/><rect x="584" y="429" width="1" height="1" fill="#103010"/><rect x="584" y="431" width="1" height="1" fill="#f0e000"/><rect x="584" y="433" width="1" height="1" fill="#f0e000"/><rect x="584" y="435" width="1" height="1" fill="#f0e000"/><rect x="584" y="437" width="1" height="1" fill="#f0e000"/><rect x="584" y="439" width="1" height="1" fill="#f0e000"/><rect x="584" y="441" width="1" height="1" fill="#103010"/><rect x="586" y="429" width="1" height="1" fill="#f0e000"/><rect x="586" y="431" width="1" height="1" fill="#103010"/><rect x="586" y="433" width="1" height="1" fill="#103010"/><rect x="586" y="435" width="1" height="1" fill="#103010"/><rect x="586" y="437" width="1" height="1" fill="#f0e000"/><rect x="586" y="439" width="1" height="1" fill="#103010"/><rect x="586" y="441" width="1" height="1" fill="#f0e000"/><rect x="588" y="429" width="1" height="1" fill="#f0e000"/><rect x="588" y="431" width="1" height="1" fill="#103010"/><rect x="588" y="433" width="1" height="1" fill="#103010"/><rect x="588" y="435" width="1" height="1" fill="#f0e000"/><rect x="588" y="437" width="1" height="1" fill="#103010"/><rect x="588" y="439" width="1" height="1" fill="#103010"/><rect x="588" y="441" width="1" height="1" fill="#f0e000"/><rect x="590" y="429" width="1" height="1" fill="#f0e000"/><rect x="590" y="431" width="1" height="1" fill="#103010"/><rect x="590" y="433" width="1" height="1" fill="#f0e000"/><rect x="590" y="435" width="1" height="1" fill="#103010"/><rect x="590" y="437" width="1" height="1" fill="#103010"/><rect x="590" y="439" width="1" height="1" fill="#103010"/><rect x="590" y="441" width="1" height="1" fill="#f0e000"/><rect x="592" y="429" width="1" height="1" fill="#103010"/><rect x="592" y="431" width="1" height="1" fill="#f0e000"/><rect x="592" y="433" width="1" height="1" fill="#f0e000"/><rect x="592" y="435" width="1" height="1" fill="#f0e000"/><rect x="592" y="437" width="1" height="1" fill="#f0e000"/><rect x="592" y="439" width="1" height="1" fill="#f0e000"/><rect x="592" y="441" width="1" height="1" fill="#103010"/><rect x="594" y="429" width="1" height="1" fill="#103010"/><rect x="594" y="431" width="1" height="1" fill="#103010"/><rect x="594" y="433" width="1" height="1" fill="#103010"/><rect x="594" y="435" width="1" height="1" fill="#103010"/><rect x="594" y="437" width="1" height="1" fill="#103010"/><rect x="594" y="439" width="1" height="1" fill="#103010"/><rect x="594" y="441" width="1" height="1" fill="#103010"/><rect x="596" y="429" width="1" height="1" fill="#103010"/><rect x="596" y="431" width="1" height="1" fill="#103010"/><rect x="596" y="433" width="1" height="1" fill="#103010"/><rect x="596" y="435" width="1" height="1" fill="#103010"/><rect x="596" y="437" width="1" height="1" fill="#103010"/><rect x="596" y="439" width="1" height="1" fill="#103010"/><rect x="596" y="441" width="1" height="1" fill="#103010"/><rect x="598" y="429" width="1" height="1" fill="#103010"/><rect x="598" y="431" width="1" height="1" fill="#103010"/><rect x="598" y="433" width="1" height="1" fill="#103010"/><rect x="598" y="435" width="1" height="1" fill="#103010"/><rect x="598" y="437" width="1" height="1" fill="#103010"/><rect x="598" y="439" width="1" height="1" fill="#103010"/><rect x="598" y="441" width="1" height="1" fill="#103010"/><rect x="600" y="429" width="1" height="1" fill="#103010"/><rect x="600" y="431" width="1" height="1" fill="#103010"/><rect x="600" y="433" width="1" height="1" fill="#f0e000"/><rect x="600" y="435" width="1" height="1" fill="#103010"/><rect x="600" y="437" width="1" height="1" fill="#103010"/><rect x="600" y="439" width="1" height="1" fill="#f0e000"/><rect x="600" y="441" width="1" height="1" fill="#103010"/><rect x="602" y="429" width="1" height="1" fill="#103010"/><rect x="602" y="431" width="1" height="1" fill="#103010"/><rect x="602" y="433" width="1" height="1" fill="#103010"/><rect x="602" y="435" width="1" height="1" fill="#103010"/><rect x="602" y="437" width="1" height="1" fill="#103010"/><rect x="602" y="439" width="1" height="1" fill="#103010"/><rect x="602" y="441" width="1" height="1" fill="#103010"/><rect x="604" y="429" width="1" height="1" fill="#103010"/><rect x="604" y="431" width="1" height="1" fill="#103010"/><rect x="604" y="433" width="1" height="1" fill="#103010"/><rect x="604" y="435" width="1" height="1" fill="#103010"/><rect x="604" y="437" width="1" height="1" fill="#103010"/><rect x="604" y="439" width="1" height="1" fill="#103010"/><rect x="604" y="441" width="1" height="1" fill="#103010"/><rect x="606" y="429" width="1" height="1" fill="#103010"/><rect x="606" y="431" width="1" height="1" fill="#103010"/><rect x="606" y="433" width="1" height="1" fill="#103010"/><rect x="606" y="435" width="1" height="1" fill="#103010"/><rect x="606" y="437" width="1" height="1" fill="#103010"/><rect x="606" y="439" width="1" height="1" fill="#103010"/><rect x="606" y="441" width="1" height="1" fill="#103010"/><rect x="608" y="429" width="1" height="1" fill="#103010"/><rect x="608" y="431" width="1" height="1" fill="#f0e000"/><rect x="608" y="433" width="1" height="1" fill="#f0e000"/><rect x="608" y="435" width="1" height="1" fill="#f0e000"/><rect x="608" y="437" width="1" height="1" fill="#f0e000"/><rect x="608" y="439" width="1" height="1" fill="#f0e000"/><rect x="608" y="441" width="1" height="1" fill="#103010"/><rect x="610" y="429" width="1" height="1" fill="#f0e000"/><rect x="610" y="431" width="1" height="1" fill="#103010"/><rect x="610" y="433" width="1" height="1" fill="#103010"/><rect x="610" y="435" width="1" height="1" fill="#103010"/><rect x="610" y="437" width="1" height="1" fill="#f0e000"/><rect x="610" y="439" width="1" height="1" fill="#103010"/><rect x="610" y="441" width="1" height="1" fill="#f0e000"/><rect x="612" y="429" width="1" height="1" fill="#f0e000"/><rect x="612" y="431" width="1" height="1" fill="#103010"/><rect x="612" y="433" width="1" height="1" fill="#103010"/><rect x="612" y="435" width="1" height="1" fill="#f0e000"/><rect x="612" y="437" width="1" height="1" fill="#103010"/><rect x="612" y="439" width="1" height="1" fill="#103010"/><rect x="612" y="441" width="1" height="1" fill="#f0e000"/><rect x="614" y="429" width="1" height="1" fill="#f0e000"/><rect x="614" y="431" width="1" height="1" fill="#103010"/><rect x="614" y="433" width="1" height="1" fill="#f0e000"/><rect x="614" y="435" width="1" height="1" fill="#103010"/><rect x="614" y="437" width="1" height="1" fill="#103010"/><rect x="614" y="439" width="1" height="1" fill="#103010"/><rect x="614" y="441" width="1" height="1" fill="#f0e000"/><rect x="616" y="429" width="1" height="1" fill="#103010"/><rect x="616" y="431" width="1" height="1" fill="#f0e000"/><rect x="616" y="433" width="1" height="1" fill="#f0e000"/><rect x="616" y="435" width="1" height="1" fill="#f0e000"/><rect x="616" y="437" width="1" height="1" fill="#f0e000"/><rect x="616" y="439" width="1" height="1" fill="#f0e000"/><rect x="616" y="441" width="1" height="1" fill="#103010"/><rect x="618" y="429" width="1" height="1" fill="#103010"/><rect x="618" y="431" width="1" height="1" fill="#103010"/><rect x="618" y="433" width="1" height="1" fill="#103010"/><rect x="618" y="435" width="1" height="1" fill="#103010"/><rect x="618" y="437" width="1" height="1" fill="#103010"/><rect x="618" y="439" width="1" height="1" fill="#103010"/><rect x="618" y="441" width="1" height="1" fill="#103010"/><rect x="620" y="429" width="1" height="1" fill="#103010"/><rect x="620" y="431" width="1" height="1" fill="#f0e000"/><rect x="620" y="433" width="1" height="1" fill="#f0e000"/><rect x="620" y="435" width="1" height="1" fill="#f0e000"/><rect x="620" y="437" width="1" height="1" fill="#f0e000"/><rect x="620" y="439" width="1" height="1" fill="#f0e000"/><rect x="620" y="441" width="1" height="1" fill="#103010"/><rect x="622" y="429" width="1" height="1" fill="#f0e000"/><rect x="622" y="431" width="1" height="1" fill="#103010"/><rect x="622" y="433" width="1" height="1" fill="#103010"/><rect x="622" y="435" width="1" height="1" fill="#103010"/><rect x="622" y="437" width="1" height="1" fill="#f0e000"/><rect x="622" y="439" width="1" height="1" fill="#103010"/><rect x="622" y="441" width="1" height="1" fill="#f0e000"/><rect x="624" y="429" width="1" height="1" fill="#f0e000"/><rect x="624" y="431" width="1" height="1" fill="#103010"/><rect x="624" y="433" width="1" height="1" fill="#103010"/><rect x="624" y="435" width="1" height="1" fill="#f0e000"/><rect x="624" y="437" width="1" height="1" fill="#103010"/><rect x="624" y="439" width="1" height="1" fill="#103010"/><rect x="624" y="441" width="1" height="1" fill="#f0e000"/><rect x="626" y="429" width="1" height="1" fill="#f0e000"/><rect x="626" y="431" width="1" height="1" fill="#103010"/><rect x="626" y="433" width="1" height="1" fill="#f0e000"/><rect x="626" y="435" width="1" height="1" fill="#103010"/><rect x="626" y="437" width="1" height="1" fill="#103010"/><rect x="626" y="439" width="1" height="1" fill="#103010"/><rect x="626" y="441" width="1" height="1" fill="#f0e000"/><rect x="628" y="429" width="1" height="1" fill="#103010"/><rect x="628" y="431" width="1" height="1" fill="#f0e000"/><rect x="628" y="433" width="1" height="1" fill="#f0e000"/><rect x="628" y="435" width="1" height="1" fill="#f0e000"/><rect x="628" y="437" width="1" height="1" fill="#f0e000"/><rect x="628" y="439" width="1" height="1" fill="#f0e000"/><rect x="628" y="441" width="1" height="1" fill="#103010"/><rect x="630" y="429" width="1" height="1" fill="#103010"/><rect x="630" y="431" width="1" height="1" fill="#103010"/><rect x="630" y="433" width="1" height="1" fill="#103010"/><rect x="630" y="435" width="1" height="1" fill="#103010"/><rect x="630" y="437" width="1" height="1" fill="#103010"/><rect x="630" y="439" width="1" height="1" fill="#103010"/><rect x="630" y="441" width="1" height="1" fill="#103010"/><rect x="632" y="429" width="1" height="1" fill="#103010"/><rect x="632" y="431" width="1" height="1" fill="#103010"/><rect x="632" y="433" width="1" height="1" fill="#103010"/><rect x="632" y="435" width="1" height="1" fill="#103010"/><rect x="632" y="437" width="1" height="1" fill="#103010"/><rect x="632" y="439" width="1" height="1" fill="#103010"/><rect x="632" y="441" width="1" height="1" fill="#103010"/><rect x="634" y="429" width="1" height="1" fill="#103010"/><rect x="634" y="431" width="1" height="1" fill="#103010"/><rect x="634" y="433" width="1" height="1" fill="#103010"/><rect x="634" y="435" width="1" height="1" fill="#103010"/><rect x="634" y="437" width="1" height="1" fill="#103010"/><rect x="634" y="439" width="1" height="1" fill="#103010"/><rect x="634" y="441" width="1" height="1" fill="#103010"/><rect x="636" y="429" width="1" height="1" fill="#103010"/><rect x="636" y="431" width="1" height="1" fill="#103010"/><rect x="636" y="433" width="1" height="1" fill="#f0e000"/><rect x="636" y="435" width="1" height="1" fill="#103010"/><rect x="636" y="437" width="1" height="1" fill="#103010"/><rect x="636" y="439" width="1" height="1" fill="#f0e000"/><rect x="636" y="441" width="1" height="1" fill="#103010"/><rect x="638" y="429" width="1" height="1" fill="#103010"/><rect x="638" y="431" width="1" height="1" fill="#103010"/><rect x="638" y="433" width="1" height="1" fill="#103010"/><rect x="638" y="435" width="1" height="1" fill="#103010"/><rect x="638" y="437" width="1" height="1" fill="#103010"/><rect x="638" y="439" width="1" height="1" fill="#103010"/><rect x="638" y="441" width="1" height="1" fill="#103010"/><rect x="640" y="429" width="1" height="1" fill="#103010"/><rect x="640" y="431" width="1" height="1" fill="#103010"/><rect x="640" y="433" width="1" height="1" fill="#103010"/><rect x="640" y="435" width="1" height="1" fill="#103010"/><rect x="640" y="437" width="1" height="1" fill="#103010"/><rect x="640" y="439" width="1" height="1" fill="#103010"/><rect x="640" y="441" width="1" height="1" fill="#103010"/><rect x="642" y="429" width="1" height="1" fill="#103010"/><rect x="642" y="431" width="1" height="1" fill="#103010"/><rect x="642" y="433" width="1" height="1" fill="#103010"/><rect x="642" y="435" width="1" height="1" fill="#103010"/><rect x="642" y="437" width="1" height="1" fill="#103010"/><rect x="642" y="439" width="1" height="1" fill="#103010"/><rect x="642" y="441" width="1" height="1" fill="#103010"/><rect x="644" y="429" width="1" height="1" fill="#103010"/><rect x="644" y="431" width="1" height="1" fill="#f0e000"/><rect x="644" y="433" width="1" height="1" fill="#f0e000"/><rect x="644" y="435" width="1" height="1" fill="#f0e000"/><rect x="644" y="437" width="1" height="1" fill="#f0e000"/><rect x="644" y="439" width="1" height="1" fill="#f0e000"/><rect x="644" y="441" width="1" height="1" fill="#103010"/><rect x="646" y="429" width="1" height="1" fill="#f0e000"/><rect x="646" y="431" width="1" height="1" fill="#103010"/><rect x="646" y="433" width="1" height="1" fill="#103010"/><rect x="646" y="435" width="1" height="1" fill="#103010"/><rect x="646" y="437" width="1" height="1" fill="#f0e000"/><rect x="646" y="439" width="1" height="1" fill="#103010"/><rect x="646" y="441" width="1" height="1" fill="#f0e000"/><rect x="648" y="429" width="1" height="1" fill="#f0e000"/><rect x="648" y="431" width="1" height="1" fill="#103010"/><rect x="648" y="433" width="1" height="1" fill="#103010"/><rect x="648" y="435" width="1" height="1" fill="#f0e000"/><rect x="648" y="437" width="1" height="1" fill="#103010"/><rect x="648" y="439" width="1" height="1" fill="#103010"/><rect x="648" y="441" width="1" height="1" fill="#f0e000"/><rect x="650" y="429" width="1" height="1" fill="#f0e000"/><rect x="650" y="431" width="1" height="1" fill="#103010"/><rect x="650" y="433" width="1" height="1" fill="#f0e000"/><rect x="650" y="435" width="1" height="1" fill="#103010"/><rect x="650" y="437" width="1" height="1" fill="#103010"/><rect x="650" y="439" width="1" height="1" fill="#103010"/><rect x="650" y="441" width="1" height="1" fill="#f0e000"/><rect x="652" y="429" width="1" height="1" fill="#103010"/><rect x="652" y="431" width="1" height="1" fill="#f0e000"/><rect x="652" y="433" width="1" height="1" fill="#f0e000"/><rect x="652" y="435" width="1" height="1" fill="#f0e000"/><rect x="652" y="437" width="1" height="1" fill="#f0e000"/><rect x="652" y="439" width="1" height="1" fill="#f0e000"/><rect x="652" y="441" width="1" height="1" fill="#103010"/><rect x="654" y="429" width="1" height="1" fill="#103010"/><rect x="654" y="431" width="1" height="1" fill="#103010"/><rect x="654" y="433" width="1" height="1" fill="#103010"/><rect x="654" y="435" width="1" height="1" fill="#103010"/><rect x="654" y="437" width="1" height="1" fill="#103010"/><rect x="654" y="439" width="1" height="1" fill="#103010"/><rect x="654" y="441" width="1" height="1" fill="#103010"/><rect x="656" y="429" width="1" height="1" fill="#103010"/><rect x="656" y="431" width="1" height="1" fill="#f0e000"/><rect x="656" y="433" width="1" height="1" fill="#f0e000"/><rect x="656" y="435" width="1" height="1" fill="#f0e000"/><rect x="656" y="437" width="1" height="1" fill="#f0e000"/><rect x="656" y="439" width="1" height="1" fill="#f0e000"/><rect x="656" y="441" width="1" height="1" fill="#103010"/><rect x="658" y="429" width="1" height="1" fill="#f0e000"/><rect x="658" y="431" width="1" height="1" fill="#103010"/><rect x="658" y="433" width="1" height="1" fill="#103010"/><rect x="658" y="435" width="1" height="1" fill="#103010"/><rect x="658" y="437" width="1" height="1" fill="#f0e000"/><rect x="658" y="439" width="1" height="1" fill="#103010"/><rect x="658" y="441" width="1" height="1" fill="#f0e000"/><rect x="660" y="429" width="1" height="1" fill="#f0e000"/><rect x="660" y="431" width="1" height="1" fill="#103010"/><rect x="660" y="433" width="1" height="1" fill="#103010"/><rect x="660" y="435" width="1" height="1" fill="#f0e000"/><rect x="660" y="437" width="1" height="1" fill="#103010"/><rect x="660" y="439" width="1" height="1" fill="#103010"/><rect x="660" y="441" width="1" height="1" fill="#f0e000"/><rect x="662" y="429" width="1" height="1" fill="#f0e000"/><rect x="662" y="431" width="1" height="1" fill="#103010"/><rect x="662" y="433" width="1" height="1" fill="#f0e000"/><rect x="662" y="435" width="1" height="1" fill="#103010"/><rect x="662" y="437" width="1" height="1" fill="#103010"/><rect x="662" y="439" width="1" height="1" fill="#103010"/><rect x="662" y="441" width="1" height="1" fill="#f0e000"/><rect x="664" y="429" width="1" height="1" fill="#103010"/><rect x="664" y="431" width="1" height="1" fill="#f0e000"/><rect x="664" y="433" width="1" height="1" fill="#f0e000"/><rect x="664" y="435" width="1" height="1" fill="#f0e000"/><rect x="664" y="437" width="1" height="1" fill="#f0e000"/><rect x="664" y="439" width="1" height="1" fill="#f0e000"/><rect x="664" y="441" width="1" height="1" fill="#103010"/><rect x="666" y="429" width="1" height="1" fill="#103010"/><rect x="666" y="431" width="1" height="1" fill="#103010"/><rect x="666" y="433" width="1" height="1" fill="#103010"/><rect x="666" y="435" width="1" height="1" fill="#103010"/><rect x="666" y="437" width="1" height="1" fill="#103010"/><rect x="666" y="439" width="1" height="1" fill="#103010"/><rect x="666" y="441" width="1" height="1" fill="#103010"/></svg>
<div style="left:680px;top:75px;width:70px;height:405px;background:#5f6e84;"></div>
<div style="left:678px;top:75px;width:1px;height:610px;background:#a8a8a8;"></div>
<div style="left:686px;top:91px;width:64px;height:46px;border:1px solid #ffffff;border-radius:3px;background:linear-gradient(#ff4040,#e00000);box-shadow:inset 0 0 0 1px #ff6060"></div>
<span style="left:692.5px;top:106px;font-size:13px;line-height:15px;color:#ffffff;font-weight:400;transform:scaleX(0.9649);transform-origin:0 0;">Break All</span>
<div style="left:704px;top:143px;width:28px;height:9px;background:#808080;box-shadow:inset 0 0 0 1px #000;"></div>
<div style="left:686px;top:175px;width:64px;height:26px;border:1px solid #ffffff;border-radius:3px;background:linear-gradient(#a8a8a8,#5c5c5c);box-shadow:inset 0 0 0 1px #000000"></div>
<span style="left:701.5px;top:180px;font-size:13px;line-height:15px;color:#ffffff;font-weight:400;transform:scaleX(0.9324);transform-origin:0 0;">Sleep</span>
<div style="left:702px;top:194px;width:8px;height:1px;background:#ffffff;"></div>
<div style="left:686px;top:219px;width:64px;height:26px;border:1px solid #ffffff;border-radius:3px;background:linear-gradient(#a8a8a8,#5c5c5c);box-shadow:inset 0 0 0 1px #000000"></div>
<span style="left:701px;top:224px;font-size:13px;line-height:15px;color:#ffffff;font-weight:400;transform:scaleX(0.8858);transform-origin:0 0;">Recall</span>
<div style="left:716px;top:238px;width:7px;height:1px;background:#ffffff;"></div>
<div style="left:686px;top:341px;width:25px;height:13px;background:#808080;box-shadow:inset 0 0 0 1px #000;"></div>
<div style="left:726px;top:341px;width:27px;height:13px;background:#808080;box-shadow:inset 0 0 0 1px #000;"></div>
<span style="left:688.5px;top:355px;font-size:13px;line-height:15px;color:#1a1a30;font-weight:400;transform:scaleX(0.8726);transform-origin:0 0;">Rd</span>
<span style="left:729px;top:355px;font-size:13px;line-height:15px;color:#1a1a30;font-weight:400;transform:scaleX(1.0513);transform-origin:0 0;">Wrt</span>
<div style="left:686px;top:378px;width:64px;height:25px;border:1px solid #ffffff;border-radius:3px;background:linear-gradient(#c00000,#600000);box-shadow:inset 0 0 0 1px #000000"></div>
<span style="left:701.5px;top:382px;font-size:13px;line-height:15px;color:#ffffff;font-weight:400;transform:scaleX(0.8995);transform-origin:0 0;">Passp</span>
<div style="left:686px;top:423px;width:64px;height:26px;border:1px solid #ffffff;border-radius:3px;background:linear-gradient(#0000c8,#000060);box-shadow:inset 0 0 0 1px #000000"></div>
<span style="left:699.5px;top:428px;font-size:13px;line-height:15px;color:#ffff00;font-weight:400;transform:scaleX(0.9770);transform-origin:0 0;">Power</span>
<div style="left:700px;top:443px;width:8px;height:1px;background:#ffff00;"></div>
<div style="left:750px;top:1px;width:1px;height:684px;background:#1a7ad4;"></div>
<div style="left:680px;top:483px;width:70px;height:1px;background:#8a8a8a;"></div>
<div style="left:680px;top:483px;width:1px;height:202px;background:#8a8a8a;"></div>
<div style="left:686px;top:491px;width:12px;height:12px;background:#ffffff;box-shadow:inset 0 0 0 1px #a0a0a0;"></div>
<span style="left:703.5px;top:490px;font-size:13px;line-height:15px;color:#000080;font-weight:700;transform:scaleX(0.9746);transform-origin:0 0;">sound</span>
<span style="left:685.5px;top:653px;font-size:11px;line-height:12px;color:#1a1a1a;font-weight:400;transform:scaleX(0.9384);transform-origin:0 0;">API number</span>
<div style="left:685px;top:668px;width:15px;height:17px;background:#d8d8d8;"></div>
<div style="left:700px;top:668px;width:38px;height:17px;background:#ffffff;"></div>
<div style="left:738px;top:668px;width:12px;height:17px;background:#d8d8d8;"></div>
<div style="left:689px;top:677px;width:8px;height:2px;background:#7090c0;"></div>
<div style="left:742px;top:677px;width:8px;height:2px;background:#7090c0;"></div>
<div style="left:744px;top:673px;width:2px;height:10px;background:#7090c0;"></div>
<span style="left:714px;top:672px;font-size:13px;line-height:15px;color:#000080;font-weight:700;transform:scaleX(0.9683);transform-origin:0 0;">1</span>
<div style="left:2px;top:454px;width:676px;height:4px;background:#a8a8a8;"></div>
<div style="left:2px;top:453px;width:676px;height:1px;background:#7a7a7a;"></div>
<div style="left:2px;top:458px;width:676px;height:1px;background:#808080;"></div>
<div style="left:3px;top:459px;width:656px;height:222px;background:#ebfdeb;"></div>
<div style="left:2px;top:458px;width:1px;height:227px;background:#808080;"></div>
<div style="left:3px;top:477px;width:656px;height:1px;background:#e4e8e2;"></div>
<div style="left:3px;top:494px;width:656px;height:1px;background:#e4e8e2;"></div>
<div style="left:3px;top:511px;width:656px;height:1px;background:#e4e8e2;"></div>
<div style="left:3px;top:528px;width:656px;height:1px;background:#e4e8e2;"></div>
<div style="left:3px;top:545px;width:656px;height:1px;background:#e4e8e2;"></div>
<div style="left:3px;top:562px;width:656px;height:1px;background:#e4e8e2;"></div>
<div style="left:3px;top:579px;width:656px;height:1px;background:#e4e8e2;"></div>
<div style="left:3px;top:596px;width:656px;height:1px;background:#e4e8e2;"></div>
<div style="left:3px;top:613px;width:656px;height:1px;background:#e4e8e2;"></div>
<div style="left:3px;top:630px;width:656px;height:1px;background:#e4e8e2;"></div>
<div style="left:3px;top:647px;width:656px;height:1px;background:#e4e8e2;"></div>
<div style="left:3px;top:664px;width:656px;height:1px;background:#e4e8e2;"></div>
<div style="left:3px;top:681px;width:656px;height:1px;background:#e4e8e2;"></div>
<div style="left:68px;top:459px;width:1px;height:222px;background:#e4e8e2;"></div>
<div style="left:659px;top:459px;width:18px;height:222px;background:#f0f0f0;"></div>
<div style="left:660px;top:503px;width:16px;height:161px;background:#cdcdcd;"></div>
<svg style="left:660px;top:462px" width="16" height="12"><path d="M3.5 8.5L8 4L12.5 8.5" fill="none" stroke="#606060" stroke-width="2"/></svg>
<svg style="left:660px;top:666px" width="16" height="12"><path d="M3.5 3.5L8 8L12.5 3.5" fill="none" stroke="#606060" stroke-width="2"/></svg>
<div style="left:3px;top:681px;width:656px;height:4px;background:#f0f0f0;"></div>
<div style="left:20px;top:681px;width:472px;height:4px;background:#cdcdcd;"></div>
<div style="left:677px;top:458px;width:1px;height:227px;background:#ffffff;"></div>
<div style="left:3px;top:459px;width:656px;height:222px;overflow:hidden">
<span style="left:6.3px;top:4px;font-size:12px;line-height:14px;color:#000000;font-weight:400;transform:scaleX(1.0984);transform-origin:0 0;">16:44:05</span>
<span style="left:71.5px;top:4px;font-size:12px;line-height:14px;color:#ff0000;font-weight:400;transform:scaleX(1.0519);transform-origin:0 0;">PORTTALK Error. Invalid driver handle</span>
<span style="left:6.3px;top:21px;font-size:12px;line-height:14px;color:#000000;font-weight:400;transform:scaleX(1.0984);transform-origin:0 0;">16:44:05</span>
<span style="left:71.5px;top:21px;font-size:12px;line-height:14px;color:#ff0000;font-weight:400;transform:scaleX(1.0737);transform-origin:0 0;">PortTalk driver not installed! Available only API access</span>
<span style="left:6.3px;top:38px;font-size:12px;line-height:14px;color:#000000;font-weight:400;transform:scaleX(1.0984);transform-origin:0 0;">16:44:05</span>
<span style="left:71.5px;top:38px;font-size:12px;line-height:14px;color:#000000;font-weight:400;transform:scaleX(1.0506);transform-origin:0 0;">API access enabled, device #1</span>
<span style="left:6.3px;top:55px;font-size:12px;line-height:14px;color:#000000;font-weight:400;transform:scaleX(1.0984);transform-origin:0 0;">16:44:09</span>
<span style="left:71.5px;top:55px;font-size:12px;line-height:14px;color:#000000;font-weight:400;transform:scaleX(1.0375);transform-origin:0 0;">Get passport... OK</span>
<span style="left:6.3px;top:72px;font-size:12px;line-height:14px;color:#000000;font-weight:400;transform:scaleX(1.0984);transform-origin:0 0;">16:44:09</span>
<span style="left:71.5px;top:72px;font-size:12px;line-height:14px;color:#000000;font-weight:400;transform:scaleX(1.0476);transform-origin:0 0;">48bit access enabled</span>
<span style="left:6.3px;top:89px;font-size:12px;line-height:14px;color:#000000;font-weight:400;transform:scaleX(1.0984);transform-origin:0 0;">16:44:09</span>
<span style="left:71.5px;top:89px;font-size:12px;line-height:14px;color:#000000;font-weight:400;transform:scaleX(1.0600);transform-origin:0 0;">Model: WDC WD2500AAJS-00L7A0; Capacity: 488397168 LBAs; SN: WD-WMAV2K591806; FW: 01.03E01</span>
<span style="left:6.3px;top:106px;font-size:12px;line-height:14px;color:#000000;font-weight:400;transform:scaleX(1.0984);transform-origin:0 0;">16:44:23</span>
<span style="left:71.5px;top:106px;font-size:12px;line-height:14px;color:#000000;font-weight:400;transform:scaleX(1.0375);transform-origin:0 0;">Get passport... OK</span>
<span style="left:6.3px;top:123px;font-size:12px;line-height:14px;color:#000000;font-weight:400;transform:scaleX(1.0984);transform-origin:0 0;">16:44:23</span>
<span style="left:71.5px;top:123px;font-size:12px;line-height:14px;color:#000000;font-weight:400;transform:scaleX(1.0496);transform-origin:0 0;">Recallibration... OK</span>
<span style="left:6.3px;top:140px;font-size:12px;line-height:14px;color:#000000;font-weight:400;transform:scaleX(1.0984);transform-origin:0 0;">16:44:24</span>
<span style="left:71.5px;top:140px;font-size:12px;line-height:14px;color:#000000;font-weight:400;transform:scaleX(1.0640);transform-origin:0 0;">Starting Reading, LBA=0..488397167, sequential access, timeout 10000ms</span>
<span style="left:6.3px;top:157px;font-size:12px;line-height:14px;color:#000000;font-weight:400;transform:scaleX(1.0984);transform-origin:0 0;">16:52:28</span>
<span style="left:71.5px;top:157px;font-size:12px;line-height:14px;color:#ff0000;font-weight:400;transform:scaleX(1.0835);transform-origin:0 0;">Warning! Block start at 84286208 = 281 ms</span>
<span style="left:6.3px;top:174px;font-size:12px;line-height:14px;color:#000000;font-weight:400;transform:scaleX(1.0984);transform-origin:0 0;">17:40:57</span>
<span style="left:71.5px;top:174px;font-size:12px;line-height:14px;color:#ff0000;font-weight:400;transform:scaleX(1.0816);transform-origin:0 0;">Warning! Block start at 483869952 = 203 ms</span>
<span style="left:6.3px;top:191px;font-size:12px;line-height:14px;color:#000000;font-weight:400;transform:scaleX(1.0984);transform-origin:0 0;">17:41:47</span>
<span style="left:71.5px;top:191px;font-size:12px;line-height:14px;color:#0000ff;font-weight:400;transform:scaleX(1.2150);transform-origin:0 0;">***** Scan results: Warnings - 2, errors - 0 *****</span>
</div>
</body></html>
